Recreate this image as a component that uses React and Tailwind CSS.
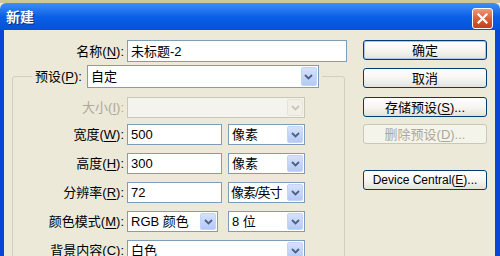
import React from "react";

function Acc({ c }) {
  return <span className="underline underline-offset-[2px]">{c}</span>;
}

function Chevron({ disabled }) {
  return (
    <svg width="9" height="6" viewBox="0 0 9 6">
      <path
        d="M1 1 L4.5 4.5 L8 1"
        fill="none"
        stroke={disabled ? "#c9c7ba" : "#4d6185"}
        strokeWidth="1.8"
      />
    </svg>
  );
}

function Select({ w, value, disabled, h, tight }) {
  return (
    <div
      className={`flex ${h || "h-[21px]"} border ${
        disabled ? "border-[#c9c7ba] bg-[#f4f3ee]" : "border-[#7f9db9] bg-white"
      } ${w}`}
    >
      <div
        className={`flex-1 flex items-center whitespace-nowrap overflow-hidden ${
          tight ? "pl-[2px] tracking-[-1px]" : "pl-[3px]"
        }`}
      >
        {value}
      </div>
      <div
        className={`w-[16px] m-[1px] rounded-[2px] flex items-center justify-center shrink-0 ${
          disabled
            ? "bg-[#f1efe6] border border-[#e6e4d8]"
            : "bg-linear-to-b from-[#d6e2fb] to-[#b4c9f4] border border-[#c3d3fd]"
        }`}
      >
        <Chevron disabled={disabled} />
      </div>
    </div>
  );
}

function Input({ w, value }) {
  return (
    <div
      className={`flex items-center h-[21px] border border-[#7f9db9] bg-white pl-[3px] ${w}`}
    >
      {value}
    </div>
  );
}

function Row({ label, children, disabled, className }) {
  return (
    <div className={`flex items-center h-[21px] ${className || ""}`}>
      <div
        className={`w-[111px] text-right whitespace-nowrap ${
          disabled ? "text-[#aca899]" : ""
        }`}
      >
        {label}
      </div>
      <div className="ml-[3px] flex gap-[6px]">{children}</div>
    </div>
  );
}

function Button({ children, disabled, def, className }) {
  return (
    <div
      className={`w-[124px] h-[20px] rounded-[3px] border flex items-center justify-center whitespace-nowrap ${
        disabled
          ? "border-[#c9c7ba] bg-[#f5f4ea] text-[#aca899]"
          : "border-[#003c74] bg-linear-to-b from-white via-[#f7f6f1] to-[#e3e2da]"
      } ${def ? "shadow-[inset_0_0_0_1px_#a9c4f0]" : ""} ${className || ""}`}
    >
      {children}
    </div>
  );
}

export default function App() {
  return (
    <div className="w-[500px] h-[256px] overflow-hidden flex flex-col bg-[#ece9d8] text-[13px] text-black font-['Liberation_Sans','Noto_Sans_CJK_SC',sans-serif] leading-none">
      <div className="h-[3px] bg-[#cfc69c] shrink-0" />
      <div className="h-[27px] shrink-0 flex items-center bg-linear-to-b from-[#3d8ef8] via-[#0a5fe6] to-[#0552d8] rounded-t-[6px]">
        <div className="pl-[6px] text-white font-bold text-[14px] [text-shadow:1px_1px_0_#0a2a80]">
          新建
        </div>
        <div className="ml-auto mr-[7px] mt-[4px] w-[21px] h-[21px] rounded-[3px] border border-white bg-linear-to-b from-[#e89a7e] via-[#d8603d] to-[#c2401f] flex items-center justify-center">
          <svg width="11" height="11" viewBox="0 0 11 11">
            <path
              d="M1.5 1.5 L9.5 9.5 M9.5 1.5 L1.5 9.5"
              stroke="white"
              strokeWidth="2.2"
              strokeLinecap="square"
            />
          </svg>
        </div>
      </div>
      <div className="flex-1 flex">
        <div className="w-[4px] bg-[#0846d8]" />
        <div className="flex-1 flex">
          <div className="w-[345px] pt-[10px]">
            <div className="flex items-center h-[22px]">
              <div className="w-[120px] text-right">
                名称(<Acc c="N" />):
              </div>
              <div className="ml-[3px]">
                <Input w="w-[220px] h-[22px]" value="未标题-2" />
              </div>
            </div>
            <fieldset className="ml-[8px] mt-[3px] w-[333px] border border-[#d0d0bf] rounded-[3px] pb-[20px]">
              <legend className="ml-[19px] px-[3px]">
                <div className="flex items-center h-[23px]">
                  <div className="whitespace-nowrap">
                    预设(<Acc c="P" />):
                  </div>
                  <div className="ml-[5px]">
                    <Select w="w-[232px]" h="h-[23px]" value="自定" />
                  </div>
                </div>
              </legend>
              <div className="pt-[9px] flex flex-col">
                <Row
                  disabled
                  label={
                    <>
                      大小(<Acc c="I" />):
                    </>
                  }
                >
                  <Select w="w-[178px]" value="" disabled />
                </Row>
                <Row
                  className="mt-[6px]"
                  label={
                    <>
                      宽度(<Acc c="W" />):
                    </>
                  }
                >
                  <Input w="w-[95px]" value="500" />
                  <Select w="w-[77px]" value="像素" />
                </Row>
                <Row
                  className="mt-[8px]"
                  label={
                    <>
                      高度(<Acc c="H" />):
                    </>
                  }
                >
                  <Input w="w-[95px]" value="300" />
                  <Select w="w-[77px]" value="像素" />
                </Row>
                <Row
                  className="mt-[8px]"
                  label={
                    <>
                      分辨率(<Acc c="R" />):
                    </>
                  }
                >
                  <Input w="w-[95px]" value="72" />
                  <Select w="w-[77px]" value="像素/英寸" tight />
                </Row>
                <Row
                  className="mt-[8px]"
                  label={
                    <>
                      颜色模式(<Acc c="M" />):
                    </>
                  }
                >
                  <Select w="w-[91px]" value="RGB 颜色" />
                  <div className="ml-[4px]">
                    <Select w="w-[77px]" value="8 位" />
                  </div>
                </Row>
                <Row
                  className="mt-[8px]"
                  label={
                    <>
                      背景内容(<Acc c="C" />):
                    </>
                  }
                >
                  <Select w="w-[178px]" value="白色" />
                </Row>
              </div>
            </fieldset>
          </div>
          <div className="ml-[14px] pt-[10px] flex flex-col">
            <Button def>确定</Button>
            <Button className="mt-[8px]">取消</Button>
            <Button className="mt-[9px]">
              存储预设(<Acc c="S" />)...
            </Button>
            <Button disabled className="mt-[7px]">
              删除预设(<Acc c="D" />)...
            </Button>
            <Button className="mt-[26px] text-[12px]">
              Device Central(<Acc c="E" />)...
            </Button>
          </div>
        </div>
        <div className="w-[5px] bg-[#0846d8]" />
      </div>
    </div>
  );
}
